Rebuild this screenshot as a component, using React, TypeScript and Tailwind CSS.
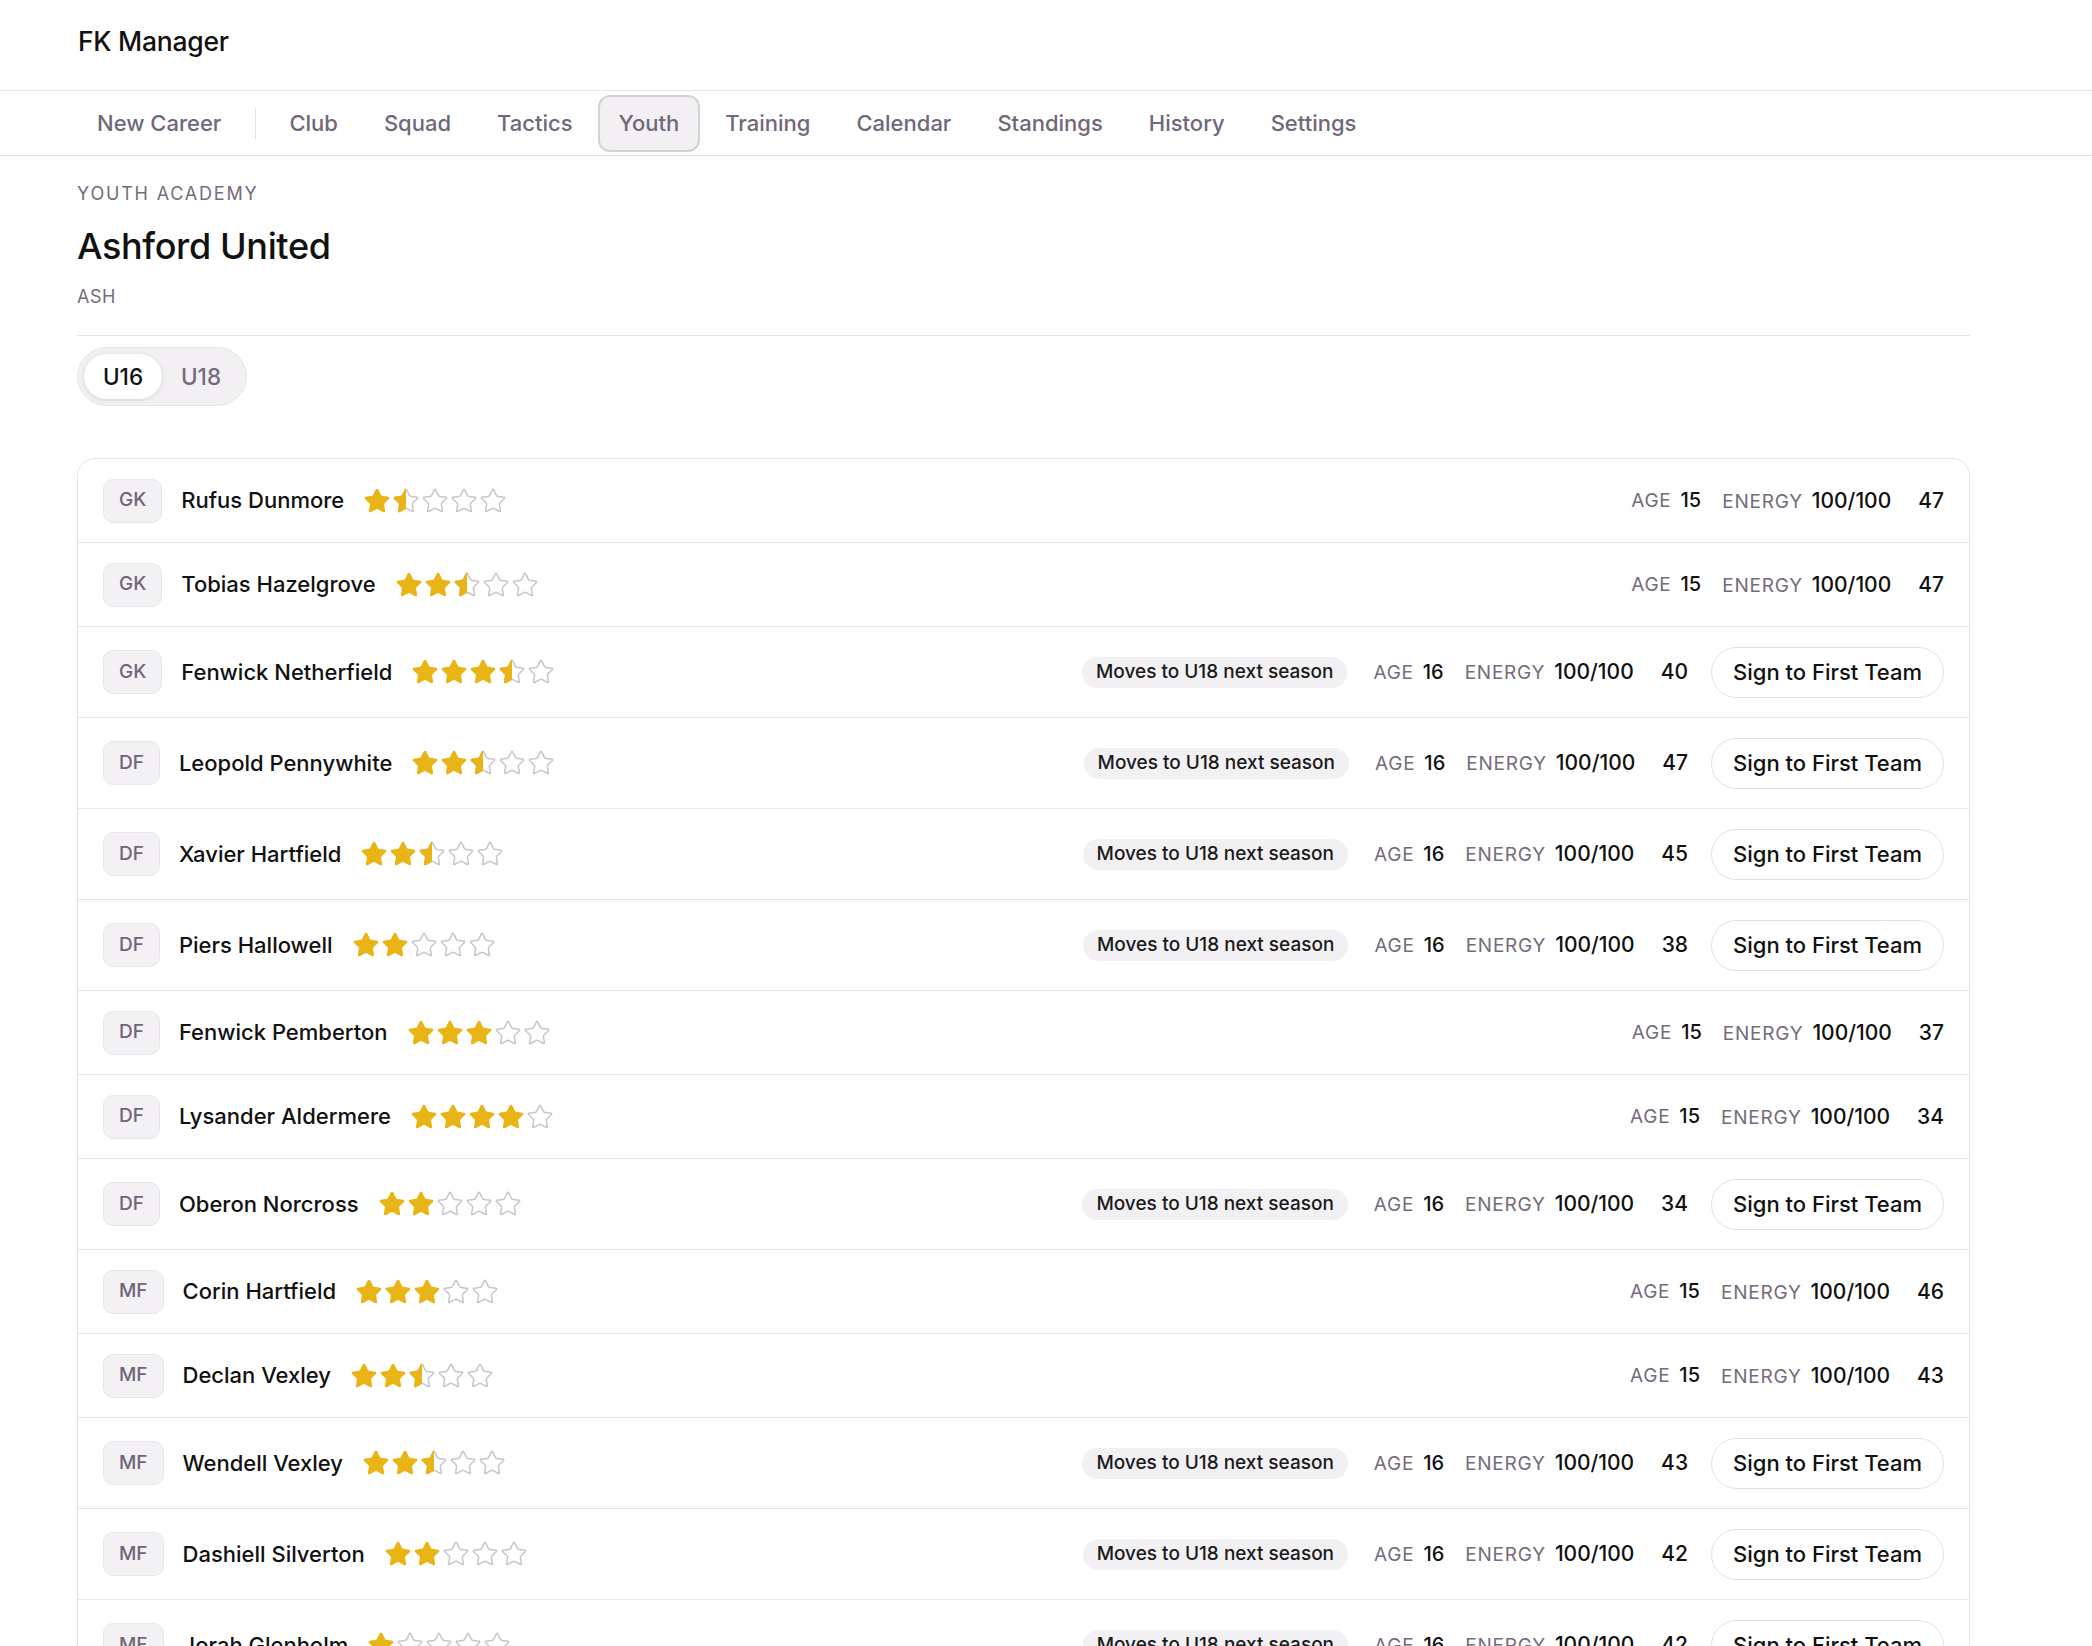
import React from "react";

type Player = {
  pos: string;
  name: string;
  stars: number;
  age: number;
  rating: number;
  moving?: boolean;
};

const players: Player[] = [
  { pos: "GK", name: "Rufus Dunmore", stars: 1.5, age: 15, rating: 47 },
  { pos: "GK", name: "Tobias Hazelgrove", stars: 2.5, age: 15, rating: 47 },
  { pos: "GK", name: "Fenwick Netherfield", stars: 3.5, age: 16, rating: 40, moving: true },
  { pos: "DF", name: "Leopold Pennywhite", stars: 2.5, age: 16, rating: 47, moving: true },
  { pos: "DF", name: "Xavier Hartfield", stars: 2.5, age: 16, rating: 45, moving: true },
  { pos: "DF", name: "Piers Hallowell", stars: 2, age: 16, rating: 38, moving: true },
  { pos: "DF", name: "Fenwick Pemberton", stars: 3, age: 15, rating: 37 },
  { pos: "DF", name: "Lysander Aldermere", stars: 4, age: 15, rating: 34 },
  { pos: "DF", name: "Oberon Norcross", stars: 2, age: 16, rating: 34, moving: true },
  { pos: "MF", name: "Corin Hartfield", stars: 3, age: 15, rating: 46 },
  { pos: "MF", name: "Declan Vexley", stars: 2.5, age: 15, rating: 43 },
  { pos: "MF", name: "Wendell Vexley", stars: 2.5, age: 16, rating: 43, moving: true },
  { pos: "MF", name: "Dashiell Silverton", stars: 2, age: 16, rating: 42, moving: true },
  { pos: "MF", name: "Jorah Glenholm", stars: 1, age: 16, rating: 42, moving: true },
];

const navItems = ["Club", "Squad", "Tactics", "Youth", "Training", "Calendar", "Standings", "History", "Settings"];

const STAR =
  "M11.525 2.295a.53.53 0 0 1 .95 0l2.31 4.679a2.123 2.123 0 0 0 1.595 1.16l5.166.756a.53.53 0 0 1 .294.904l-3.736 3.638a2.123 2.123 0 0 0-.611 1.878l.882 5.14a.53.53 0 0 1-.771.56l-4.618-2.428a2.122 2.122 0 0 0-1.973 0L6.396 21.01a.53.53 0 0 1-.77-.56l.881-5.139a2.122 2.122 0 0 0-.611-1.879L2.16 9.795a.53.53 0 0 1 .294-.906l5.165-.755a2.122 2.122 0 0 0 1.597-1.16z";

function Star({ fill, id }: { fill: "full" | "half" | "empty"; id: string }) {
  return (
    <svg width="28" height="28" viewBox="0 0 24 24" className="shrink-0">
      <defs>
        <clipPath id={id}>
          <rect x="0" y="0" width="12" height="24" />
        </clipPath>
      </defs>
      {fill !== "full" && (
        <path d={STAR} fill="none" stroke="#c9c5cd" strokeWidth="1.3" strokeLinejoin="round" />
      )}
      {fill === "full" && (
        <path d={STAR} fill="#e9b416" stroke="#e9b416" strokeWidth="1.2" strokeLinejoin="round" />
      )}
      {fill === "half" && (
        <path
          d={STAR}
          fill="#e9b416"
          stroke="#e9b416"
          strokeWidth="1.2"
          strokeLinejoin="round"
          clipPath={`url(#${id})`}
        />
      )}
    </svg>
  );
}

function Stars({ value, rowKey }: { value: number; rowKey: number }) {
  return (
    <div className="flex items-center gap-[1px]">
      {[0, 1, 2, 3, 4].map((i) => {
        const f = value >= i + 1 ? "full" : value >= i + 0.5 ? "half" : "empty";
        return <Star key={i} fill={f} id={`half-${rowKey}-${i}`} />;
      })}
    </div>
  );
}

function PlayerRow({ p, idx, isLast }: { p: Player; idx: number; isLast: boolean }) {
  return (
    <div
      className={`flex items-center px-[25px] py-[19.5px] ${!isLast ? "border-b border-[#e8e6ea]" : ""}`}
    >
      <div className="flex items-center">
        <div className="h-[44px] px-[15px] rounded-[10px] bg-[#f3f1f4] border border-[#e9e6eb] flex items-center justify-center text-[19px] font-medium text-[#6f6577]">
          {p.pos}
        </div>
        <span className="ml-[19px] text-[22px] font-medium text-[#111]">{p.name}</span>
        <div className="ml-[19px]">
          <Stars value={p.stars} rowKey={idx} />
        </div>
      </div>

      <div className="ml-auto flex items-center">
        {p.moving && (
          <span className="mr-[26px] h-[31px] px-[14px] rounded-full bg-[#f2f0f3] flex items-center text-[19px] font-medium text-[#1a1a1a]">
            Moves to U18 next season
          </span>
        )}
        <div className="flex items-center gap-[21px]">
          <div className="flex items-baseline gap-[9px]">
            <span className="text-[19px] tracking-[0.04em] text-[#756b7c]">AGE</span>
            <span className="text-[20px] font-medium text-[#111]">{p.age}</span>
          </div>
          <div className="flex items-baseline gap-[9px]">
            <span className="text-[19px] tracking-[0.04em] text-[#756b7c]">ENERGY</span>
            <span className="text-[21px] font-medium text-[#111]">100/100</span>
          </div>
        </div>
        <span className="ml-[27px] text-[21px] font-medium text-[#111]">{p.rating}</span>
        {p.moving && (
          <button className="ml-[23px] h-[51px] px-[21px] rounded-full border border-[#e3e0e5] bg-white text-[22px] font-medium text-[#111]">
            Sign to First Team
          </button>
        )}
      </div>
    </div>
  );
}

export default function App() {
  return (
    <div className="min-h-screen bg-white font-['Inter','Noto_Sans',sans-serif] text-[#111]">
      {/* Top bar */}
      <header className="h-[91px] border-b border-[#e6e4e8] flex items-center pl-[78px] pb-[6px]">
        <span className="text-[26.5px] font-medium tracking-[-0.01em]">FK Manager</span>
      </header>

      {/* Nav */}
      <nav className="border-b border-[#e6e4e8] pl-[75px] pt-[4px] pb-[3px] flex items-center gap-[4px]">
        <span className="h-[57px] px-[20px] flex items-center border-2 border-transparent rounded-[12px] text-[22px] font-medium text-[#71677a]">
          New Career
        </span>
        <span className="mx-[8px] w-px h-[31px] bg-[#e2dfe5]" />
        {navItems.map((n) => (
          <span
            key={n}
            className={`h-[57px] px-[19px] flex items-center rounded-[12px] border-2 text-[22px] font-medium text-[#71677a] ${
              n === "Youth" ? "bg-[#f2f0f3] border-[#d5d1d8]" : "border-transparent"
            }`}
          >
            {n}
          </span>
        ))}
      </nav>

      {/* Content */}
      <main className="pl-[77px] pt-[26px] pb-[60px]">
        <div className="w-[1893px]">
          <p className="text-[18px] leading-[24px] tracking-[0.1em] text-[#756b7c]">YOUTH ACADEMY</p>
          <h1 className="mt-[18px] text-[36px] leading-[44px] font-medium tracking-[-0.01em] text-[#111]">
            Ashford United
          </h1>
          <p className="mt-[18px] text-[18px] leading-[22px] tracking-[0.03em] text-[#756b7c]">ASH</p>

          <div className="mt-[27px] border-t border-[#e6e3e8]" />

          <div className="mt-[11px] inline-flex items-center p-[6px] rounded-full bg-[#f2f0f3] border border-[#e8e5ea]">
            <span className="w-[78px] h-[45px] rounded-full bg-white shadow-[0_1px_4px_rgba(0,0,0,0.12)] flex items-center justify-center text-[22.5px] font-medium text-[#111]">
              U16
            </span>
            <span className="w-[78px] h-[45px] rounded-full flex items-center justify-center text-[22.5px] font-medium text-[#756b7c]">
              U18
            </span>
          </div>

          <div className="mt-[52px] rounded-[18px] border border-[#e5e2e7] bg-white">
            {players.map((p, i) => (
              <PlayerRow key={p.name} p={p} idx={i} isLast={i === players.length - 1} />
            ))}
          </div>
        </div>
      </main>
    </div>
  );
}
